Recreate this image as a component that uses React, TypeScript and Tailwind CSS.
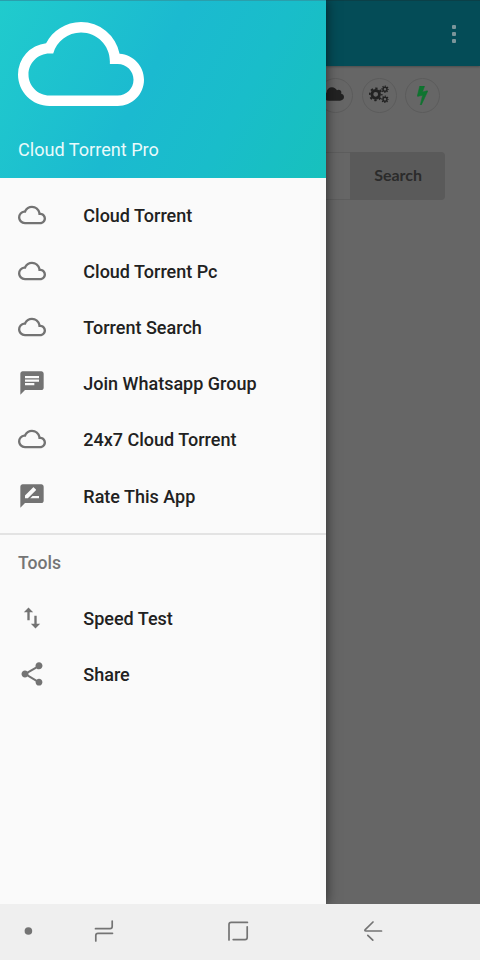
import type { ReactNode } from 'react';
import { MdChat, MdRateReview, MdSwapVert, MdShare } from 'react-icons/md';

const CLOUD =
  'M19.35 10.04A7.49 7.49 0 0012 4C9.11 4 6.6 5.64 5.35 8.04A5.994 5.994 0 000 14c0 3.31 2.69 6 6 6h13c2.76 0 5-2.24 5-5 0-2.64-2.05-4.78-4.65-4.96zM19 18H6c-2.21 0-4-1.79-4-4s1.79-4 4-4h.71C7.37 7.69 9.48 6 12 6c3.04 0 5.5 2.46 5.5 5.5v.5H19c1.66 0 3 1.34 3 3s-1.34 3-3 3z';

function CloudIcon() {
  return (
    <svg viewBox="0 0 24 24" className="size-7" fill="currentColor">
      <path d={CLOUD} />
    </svg>
  );
}

function Gear({ x, y, r, w, tooth }: { x: number; y: number; r: number; w: number; tooth: number }) {
  const outer = r + w / 2 + tooth / 2 - 0.2;
  const step = (2 * Math.PI * outer) / 8;
  return (
    <g fill="none" stroke="currentColor">
      <circle cx={x} cy={y} r={r} strokeWidth={w} />
      <circle cx={x} cy={y} r={outer} strokeWidth={tooth} strokeDasharray={`${step * 0.5} ${step * 0.5}`} strokeDashoffset={step * 0.25} />
    </g>
  );
}

function Item({ icon, label }: { icon: ReactNode; label: string }) {
  return (
    <li className="flex h-[56.1px] items-center pl-[18px]">
      <span className="flex w-[65.3px] pb-px text-[#737373]">{icon}</span>
      <span className="text-[18px] font-medium text-[#212121]">{label}</span>
    </li>
  );
}

function Round({ children }: { children: ReactNode }) {
  return (
    <span className="flex size-[35px] shrink-0 items-center justify-center rounded-full border border-[#5c5c5c] text-[#222]">
      {children}
    </span>
  );
}

function Drawer() {
  return (
    <aside className="relative z-10 w-[326.4px] shrink-0 bg-[#fafafa] shadow-[0_0_12px_rgba(0,0,0,0.6)]">
      <header className="h-[178px] border-t border-[#2a9fac] bg-[linear-gradient(118deg,#20cbcd_0%,#1bbad0_45%,#19bdca_70%,#17c1bd_100%)] pl-[18px] pt-[21px]">
        <svg viewBox="0 4 24 16" className="h-[84px] w-[126px]" fill="#fff">
          <path d={CLOUD} />
        </svg>
        <div className="mt-8 text-[18.1px] leading-6 text-[#e9fafb]">Cloud Torrent Pro</div>
      </header>
      <ul className="pt-[9.5px]">
        <Item icon={<CloudIcon />} label="Cloud Torrent" />
        <Item icon={<CloudIcon />} label="Cloud Torrent Pc" />
        <Item icon={<CloudIcon />} label="Torrent Search" />
        <Item icon={<MdChat size={28} />} label="Join Whatsapp Group" />
        <Item icon={<CloudIcon />} label="24x7 Cloud Torrent" />
        <Item icon={<MdRateReview size={28} />} label="Rate This App" />
      </ul>
      <div className="mt-[9px] h-[57.300px] border-t-2 border-[#e3e3e3] pl-[18px] pt-[16px] text-[17.6px] font-medium leading-6 text-[#757575]">
        Tools
      </div>
      <ul>
        <Item icon={<MdSwapVert size={28} />} label="Speed Test" />
        <Item icon={<MdShare size={28} />} label="Share" />
      </ul>
    </aside>
  );
}

function Page() {
  return (
    <main className="min-w-0 flex-1 bg-[#666]">
      <div className="flex h-[66px] items-center justify-end border-t border-[#0b4048] bg-[#044c57] pr-6 shadow-[0_1px_2px_rgba(0,0,0,0.25)]">
        <div className="flex flex-col gap-[3px]">
          <i className="size-1 rounded-[1px] bg-[#7b959a]" />
          <i className="size-1 rounded-[1px] bg-[#7b959a]" />
          <i className="size-1 rounded-[1px] bg-[#7b959a]" />
        </div>
      </div>
      <div className="flex justify-end gap-[8.5px] pr-10 pt-[12px]">
        <Round>
          <svg viewBox="0 0 1920 1280" className="-mt-1 mr-[3px] h-[14px] w-[20px]" fill="currentColor">
            <path d="M1920 896q0 159-112.500 271.500T1536 1280H448q-185 0-316.500-131.500T0 832q0-132 71-241.500T258 427q-2-28-2-43 0-212 150-362T768-128q158 0 286.500 88T1241 190q70-62 167-62 106 0 181 75t75 181q0 75-41 138 129 30 213 134.500t84 239.500z" transform="translate(0 115) scale(1 .91)" />
          </svg>
        </Round>
        <Round>
          <svg viewBox="0 0 20 20" className="-mt-1 size-5">
            <Gear x={6.7} y={10.3} r={3.8} w={2.8} tooth={1.9} />
            <Gear x={16} y={5.2} r={2} w={1.5} tooth={1.2} />
            <Gear x={16} y={15.3} r={2} w={1.5} tooth={1.2} />
          </svg>
        </Round>
        <Round>
          <svg viewBox="0 0 896 1664" className="h-[19px] w-[11px] text-[#0f7430]" fill="currentColor" stroke="currentColor" strokeWidth="50">
            <path d="M885 438q18 20 7 44L352 1639q-13 25-42 25-4 0-14-2-17-5-25.500-19t-4.500-30l197-808-406 101q-4 1-12 1-18 0-31-11-18-15-13-39L202 32q4-14 16-23t28-9h328q19 0 32 12.500t13 29.500q0 8-5 18L443 523l396-98q8-2 12-2 19 0 34 15z" />
          </svg>
        </Round>
      </div>
      <div className="mt-[38.500px] flex h-12">
        <div className="w-6 border-y border-[#5d5d5d]" />
        <button className="w-[94.500px] rounded-r-[4px] bg-[#5a5a5a] pb-0.5 pl-px font-['Lato',sans-serif] text-[16px] font-bold text-[#2b2b2b]">
          Search
        </button>
      </div>
    </main>
  );
}

function NavBar() {
  return (
    <nav className="h-14 bg-[#efefef]">
      <svg viewBox="0 904 480 56" className="block h-14 w-[480px]" fill="none" stroke="#747474" strokeWidth="1.7" strokeLinecap="round" strokeLinejoin="round">
        <circle cx="28.400" cy="931" r="3.800" fill="#747474" stroke="none" />
        <path d="M95.500 928.700h14.500q2.200 0 2.200-2.200v-5.500M112.500 933.300H98q-2.200 0-2.200 2.200v5.500" />
        <path d="M247.400 922.400h-16.200q-2.200 0-2.200 2.200V940M247.200 926.800v10.600q0 2.200-2.200 2.200h-11.800" />
        <path d="M373 922l-7.500 7.300q-1.500 1.700.500 1.700h15.500M367.800 935.400l5 4.800" />
      </svg>
    </nav>
  );
}

export default function App() {
  return (
    <div className="flex h-[960px] w-[480px] flex-col overflow-hidden font-['Roboto',sans-serif]">
      <div className="flex min-h-0 flex-1 overflow-hidden">
        <Drawer />
        <Page />
      </div>
      <NavBar />
    </div>
  );
}
